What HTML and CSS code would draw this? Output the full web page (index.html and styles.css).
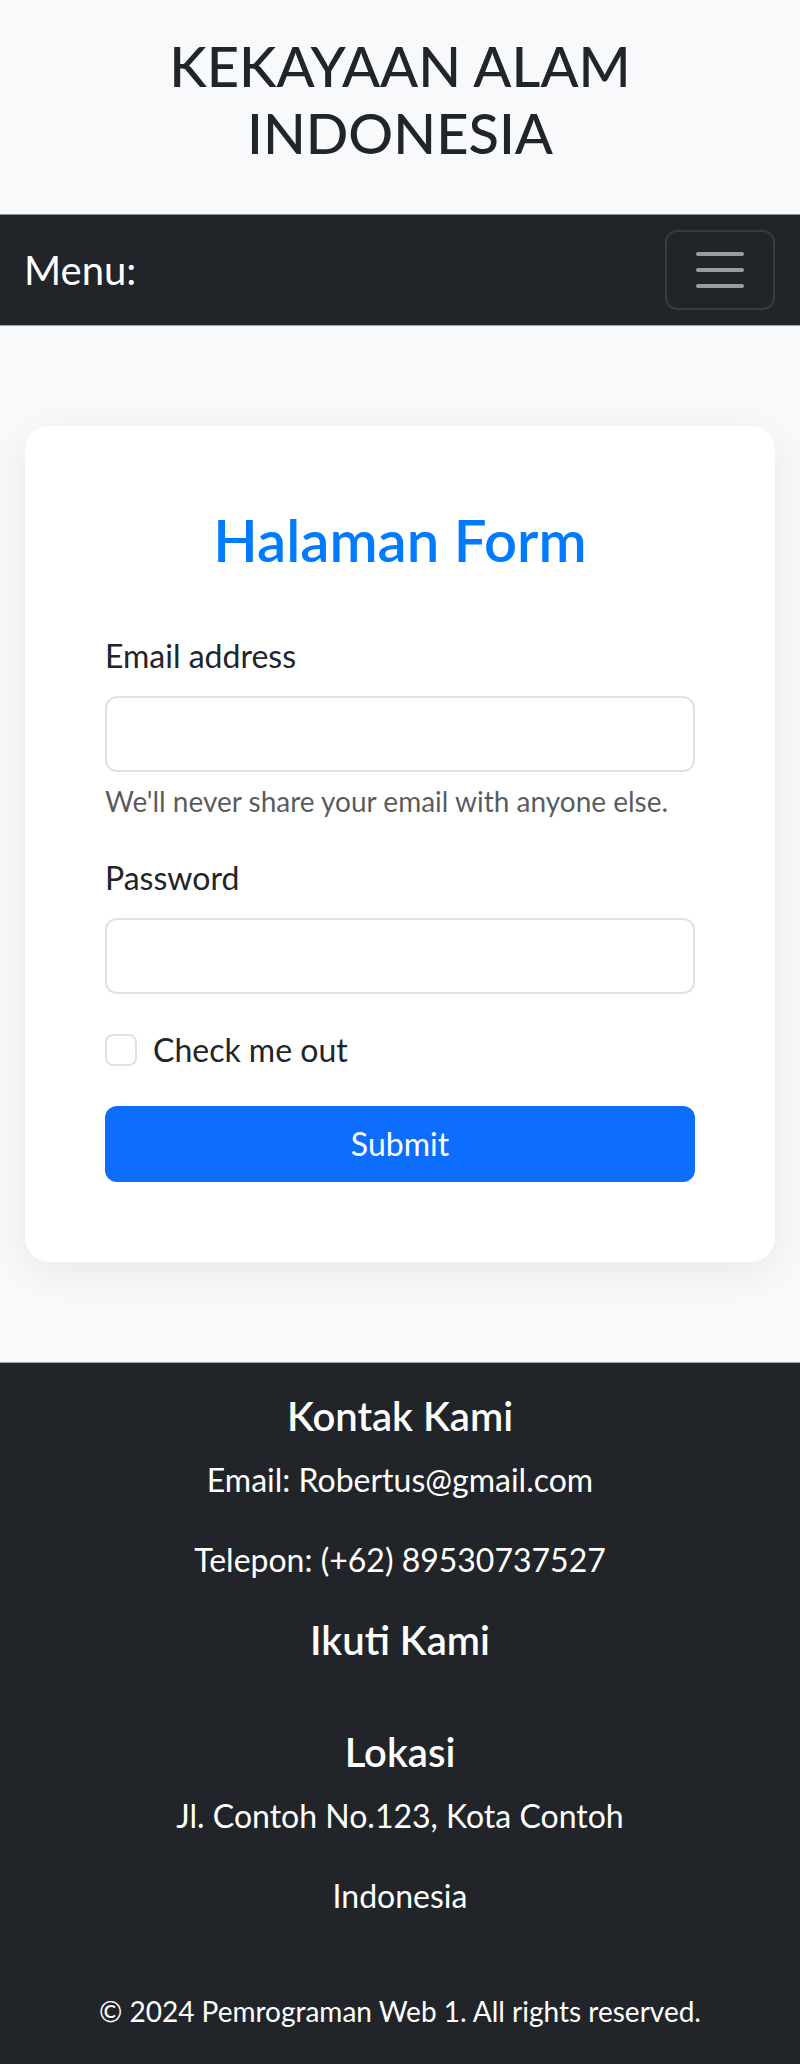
FILE: index.html
```html
<!DOCTYPE html>
<html lang="id">
<head>
<meta charset="utf-8">
<title>Kekayaan Alam Indonesia</title>
<link rel="stylesheet" href="styles.css">
</head>
<body>
<header class="site-header">
  <h1 class="site-title">KEKAYAAN ALAM INDONESIA</h1>
</header>
<nav class="navbar">
  <span class="brand">Menu:</span>
  <button class="toggler" type="button" aria-label="Toggle navigation">
    <svg class="toggler-icon" viewBox="0 0 30 30" width="60" height="60">
      <path d="M4 7h22M4 15h22M4 23h22" stroke="rgba(255,255,255,0.55)" stroke-width="2" stroke-linecap="round" fill="none"/>
    </svg>
  </button>
</nav>
<main class="main">
  <section class="card">
    <h2 class="form-title">Halaman Form</h2>
    <form class="form">
      <div class="group">
        <label class="label" for="email">Email address</label>
        <input class="control" type="email" id="email">
        <div class="hint">We'll never share your email with anyone else.</div>
      </div>
      <div class="group">
        <label class="label" for="pw">Password</label>
        <input class="control" type="password" id="pw">
      </div>
      <div class="group check">
        <input class="check-input" type="checkbox" id="chk">
        <label class="check-label" for="chk">Check me out</label>
      </div>
      <button class="submit" type="submit">Submit</button>
    </form>
  </section>
</main>
<footer class="footer">
  <div class="col">
    <h5 class="f-head">Kontak Kami</h5>
    <p class="f-text">Email: Robertus@gmail.com</p>
    <p class="f-text">Telepon: (+62) 89530737527</p>
  </div>
  <div class="col col-social">
    <h5 class="f-head">Ikuti Kami</h5>
  </div>
  <div class="col">
    <h5 class="f-head">Lokasi</h5>
    <p class="f-text">Jl. Contoh No.123, Kota Contoh</p>
    <p class="f-text">Indonesia</p>
  </div>
  <p class="copyright">© 2024 Pemrograman Web 1. All rights reserved.</p>
</footer>
</body>
</html>
```
FILE: styles.css
```css
* { box-sizing: border-box; }
html, body { margin: 0; padding: 0; }
body {
  font-family: Lato, "Open Sans", "Liberation Sans", sans-serif;
  font-size: 32px;
  line-height: 1.5;
  color: #212529;
  background: #f8f9fa;
}
.site-header {
  background: #f8f9fa;
  padding: 32px 24px;
  text-align: center;
}
.site-title {
  margin: 0 0 16px;
  font-size: 56px;
  font-weight: 500;
  line-height: 1.2;
  color: #212529;
}
.navbar {
  background: #212529;
  border-top: 1px solid #8d8f91;
  border-bottom: 1px solid #a3a5a7;
  padding: 15px 25px 15px 24px;
  display: flex;
  align-items: center;
  justify-content: space-between;
}
.brand {
  color: #fff;
  font-size: 40px;
  line-height: 1.5;
  padding: 10px 0;
}
.toggler {
  background: transparent;
  border: 2px solid rgba(255,255,255,0.1);
  border-radius: 12px;
  padding: 8px 23px;
  display: flex;
  align-items: center;
  cursor: pointer;
}
.toggler-icon { display: block; }
.main {
  padding: 100px 25px;
}
.card {
  background: #fff;
  border-radius: 24px;
  box-shadow: 0 10px 40px rgba(0,0,0,0.07);
  padding: 80px;
}
.form-title {
  margin: 0 0 58px;
  text-align: center;
  color: #007bff;
  font-size: 58px;
  font-weight: 600;
  line-height: 1.16;
}
.group { margin-bottom: 32px; }
.label {
  display: block;
  margin-bottom: 16px;
}
.control {
  display: block;
  width: 100%;
  height: 76px;
  padding: 12px 24px;
  font: inherit;
  border: 2px solid #dee2e6;
  border-radius: 12px;
  background: #fff;
}
.hint {
  margin-top: 8px;
  font-size: 28px;
  line-height: 1.5;
  color: rgba(33,37,41,0.75);
}
.check {
  display: flex;
  align-items: flex-start;
  min-height: 48px;
  gap: 16px;
}
.check-input {
  appearance: none;
  -webkit-appearance: none;
  width: 32px;
  height: 32px;
  margin: 8px 0 0;
  border: 2px solid #dee2e6;
  border-radius: 8px;
  background: #fff;
  flex: none;
}
.submit {
  display: block;
  width: 100%;
  height: 76px;
  font: inherit;
  color: #fff;
  background: #0d6efd;
  border: 2px solid #0d6efd;
  border-radius: 12px;
}
.footer {
  background: #212529;
  color: #fff;
  text-align: center;
  border-top: 1px solid #a3a5a7;
  padding: 29px 24px 33px;
}
.f-head {
  margin: 0 0 16px;
  font-size: 40px;
  font-weight: 600;
  line-height: 1.2;
}
.f-text { margin: 0 0 32px; }
.col-social { padding-bottom: 48px; }
.copyright {
  margin: 70px 0 0;
  font-size: 28px;
}
```
